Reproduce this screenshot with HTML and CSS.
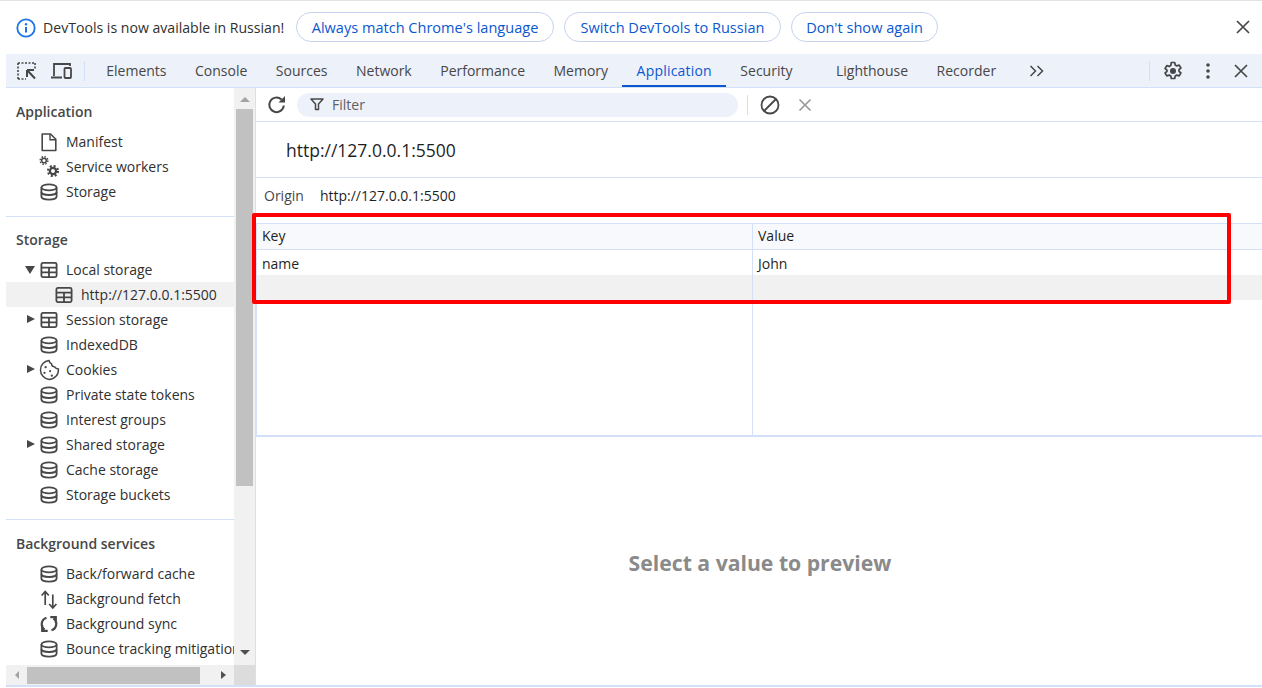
FILE: index.html
```html
<!DOCTYPE html>
<html lang="en">
<head>
<meta charset="utf-8">
<title>DevTools</title>
<link rel="stylesheet" href="styles.css">
</head>
<body>
<svg class="defs" width="0" height="0" aria-hidden="true">
  <symbol id="db" viewBox="0 0 18 18"><g fill="none" stroke="currentColor" stroke-width="1.800"><ellipse cx="9" cy="4.400" rx="7.600" ry="3"/><path d="M1.400 4.400v9.200c0 1.700 3.400 3 7.600 3s7.600-1.300 7.600-3V4.400"/><path d="M1.400 9c0 1.700 3.400 3 7.600 3s7.600-1.300 7.600-3"/></g></symbol>
  <symbol id="tbl" viewBox="0 0 18 18"><g fill="none" stroke="currentColor" stroke-width="1.800"><rect x="1.400" y="1.900" width="15.200" height="14.200" rx="1.500"/><path d="M1.400 6.700h15.200M1.400 11.400h15.200M9 6.700V16"/></g></symbol>
</svg>
<div class="infobar">
  <svg class="info-icon" viewBox="0 0 20 20" width="20" height="20"><circle cx="10" cy="10" r="8.700" fill="none" stroke="#1a73e8" stroke-width="1.800"/><path d="M10 9v5.500" stroke="#1a73e8" stroke-width="2"/><circle cx="10" cy="6.200" r="1.200" fill="#1a73e8"/></svg>
  <span class="info-text">DevTools is now available in Russian!</span>
  <button class="pill pill-always">Always match Chrome's language</button>
  <button class="pill pill-switch">Switch DevTools to Russian</button>
  <button class="pill pill-dont">Don't show again</button>
  <span class="spacer"></span>
  <svg class="x-icon" viewBox="0 0 14 14" width="14" height="14"><path d="M1 1l12 12M13 1L1 13" stroke="#474747" stroke-width="1.700"/></svg>
</div>
<div class="shell">
  <div class="tabbar">
    <svg class="tb-inspect" viewBox="0 0 20 18" width="20" height="18"><path d="M1 1h17M1 1v16M1 17h8M18 1v6" fill="none" stroke="#474747" stroke-width="1.600" stroke-dasharray="2 1.500"/><path d="M10 8h7M10 8v7M10 8l8 8.500" fill="none" stroke="#474747" stroke-width="2"/></svg>
    <svg class="tb-device" viewBox="0 0 22 18" width="22" height="18"><path d="M3 14V2h16v2M0 15.500h11" fill="none" stroke="#474747" stroke-width="1.800"/><rect x="13.500" y="6" width="6.500" height="10" rx="1" fill="none" stroke="#474747" stroke-width="1.800"/></svg>
    <span class="tb-sep tb-sep-left"></span>
    <span class="tab">Elements</span>
    <span class="tab">Console</span>
    <span class="tab">Sources</span>
    <span class="tab">Network</span>
    <span class="tab">Performance</span>
    <span class="tab">Memory</span>
    <span class="tab tab-active">Application</span>
    <span class="tab">Security</span>
    <span class="tab tab-far">Lighthouse</span>
    <span class="tab">Recorder</span>
    <svg class="tb-more" viewBox="0 0 16 12" width="16" height="12"><path d="M1.500 1l5 5-5 5M8.500 1l5 5-5 5" fill="none" stroke="#474747" stroke-width="1.500"/></svg>
    <span class="spacer"></span>
    <span class="tb-sep"></span>
    <svg class="tb-gear" viewBox="0 0 20 20" width="20" height="20"><path d="M8.300 1.500h3.400l.5 2.500 1.600.9 2.400-.8 1.700 2.900-1.900 1.700v1.600l1.900 1.700-1.700 2.900-2.400-.8-1.600.9-.5 2.500H8.300l-.5-2.500-1.600-.9-2.400.8-1.700-2.900 1.900-1.700V9.200L2.100 7.500l1.700-2.900 2.400.8 1.600-.9z" fill="none" stroke="#474747" stroke-width="1.700" stroke-linejoin="round"/><circle cx="10" cy="10" r="3" fill="#474747"/></svg>
    <svg class="tb-dots" viewBox="0 0 4 16" width="4" height="16"><circle cx="2" cy="2" r="1.800" fill="#474747"/><circle cx="2" cy="8" r="1.800" fill="#474747"/><circle cx="2" cy="14" r="1.800" fill="#474747"/></svg>
    <svg class="tb-close" viewBox="0 0 14 14" width="14" height="14"><path d="M1 1l12 12M13 1L1 13" stroke="#474747" stroke-width="1.700"/></svg>
  </div>
  <div class="panes">
    <aside class="sidepane">
      <div class="side-row">
        <nav class="side-scroll">
          <section class="side-sec side-first">
            <h3 class="side-head">Application</h3>
            <div class="item"><svg class="ico ico-free" viewBox="0 0 18 18"><path d="M2.200 1h8.300l5.300 5.300V17.500H2.200z" fill="none" stroke="currentColor" stroke-width="1.600" stroke-linejoin="round"/><path d="M10 1v5.800h5.800" fill="none" stroke="currentColor" stroke-width="1.400"/></svg><span>Manifest</span></div>
            <div class="item"><svg class="ico ico-free" viewBox="0 0 18 18"><g fill="none" stroke="currentColor"><circle cx="4" cy="2.500" r="2.300" stroke-width="1.500"/><circle cx="4" cy="2.500" r="3.800" stroke-width="1.500" stroke-dasharray="1.500 1.480"/><circle cx="13" cy="13" r="3.100" stroke-width="2.300"/><circle cx="13" cy="13" r="5" stroke-width="2.200" stroke-dasharray="2 1.930"/></g></svg><span>Service workers</span></div>
            <div class="item"><svg class="ico"><use href="#db"/></svg><span>Storage</span></div>
          </section>
          <section class="side-sec">
            <h3 class="side-head">Storage</h3>
            <div class="item"><i class="arrow arrow-down"></i><svg class="ico"><use href="#tbl"/></svg><span>Local storage</span></div>
            <div class="item item-child item-sel"><svg class="ico"><use href="#tbl"/></svg><span>http://127.0.0.1:5500</span></div>
            <div class="item"><i class="arrow"></i><svg class="ico"><use href="#tbl"/></svg><span>Session storage</span></div>
            <div class="item"><svg class="ico"><use href="#db"/></svg><span>IndexedDB</span></div>
            <div class="item"><i class="arrow"></i><svg class="ico ico-free" viewBox="2 2 16 16"><path d="M10 1.500c.2 1.800 1 2.600 2.200 3 .1 1.700 1.300 2.800 3 2.800.4 1 1.300 1.600 3.200 1.800.4 5-3.500 9.300-8.400 9.300A8.500 8.500 0 0 1 10 1.500z" fill="none" stroke="currentColor" stroke-width="1.300"/><circle cx="7" cy="7.500" r="1" fill="currentColor"/><circle cx="6" cy="12.500" r="1" fill="currentColor"/><circle cx="11" cy="11" r=".9" fill="currentColor"/><circle cx="12.500" cy="15" r="1" fill="currentColor"/></svg><span>Cookies</span></div>
            <div class="item"><svg class="ico"><use href="#db"/></svg><span>Private state tokens</span></div>
            <div class="item"><svg class="ico"><use href="#db"/></svg><span>Interest groups</span></div>
            <div class="item"><i class="arrow"></i><svg class="ico"><use href="#db"/></svg><span>Shared storage</span></div>
            <div class="item"><svg class="ico"><use href="#db"/></svg><span>Cache storage</span></div>
            <div class="item"><svg class="ico"><use href="#db"/></svg><span>Storage buckets</span></div>
          </section>
          <section class="side-sec side-last">
            <h3 class="side-head">Background services</h3>
            <div class="item"><svg class="ico"><use href="#db"/></svg><span>Back/forward cache</span></div>
            <div class="item"><svg class="ico ico-free" viewBox="0 0 18 18"><path d="M5.200 15V1.500M1.600 5.500l3.600-4 3.600 4M12.800 4.500V18M9.200 14l3.600 4 3.600-4" fill="none" stroke="currentColor" stroke-width="1.700"/></svg><span>Background fetch</span></div>
            <div class="item"><svg class="ico ico-free" viewBox="0 0 18 18"><path d="M6.500 2.800A6.600 6.600 0 0 0 4.500 14.500M11.500 15.200A6.600 6.600 0 0 0 13.500 3.500M2.200 10v5.800h5.500M15.800 8V2.200h-5.500" fill="none" stroke="currentColor" stroke-width="2.200"/></svg><span>Background sync</span></div>
            <div class="item"><svg class="ico"><use href="#db"/></svg><span>Bounce tracking mitigations</span></div>
            <div class="item"><svg class="ico" viewBox="0 0 18 18"><path d="M9 0v2M4 13V8a5 5 0 0 1 10 0v5l1.500 2h-13z" fill="none" stroke="currentColor" stroke-width="1.600"/></svg><span>Notifications</span></div>
          </section>
        </nav>
        <div class="vscroll">
          <i class="tri tri-up"></i>
          <div class="vtrack"><div class="vthumb"></div></div>
          <i class="tri tri-down"></i>
        </div>
      </div>
      <div class="hscroll">
        <i class="tri tri-left"></i>
        <div class="htrack"><div class="hthumb"></div></div>
        <i class="tri tri-right"></i>
        <span class="hcorner"></span>
      </div>
    </aside>
    <main class="mainpane">
      <div class="filterbar">
        <svg class="fb-reload" viewBox="0 0 20 20" width="20" height="20"><path d="M16.800 10.500A7.300 7.300 0 1 1 14.500 4.500" fill="none" stroke="#474747" stroke-width="2"/><path d="M18 1v6.500h-6.500z" fill="#474747"/></svg>
        <div class="filter"><svg viewBox="0 0 14 14" width="14" height="14"><path d="M1 2h12L8.500 7v5.500h-3V7z" fill="none" stroke="#474747" stroke-width="1.500" stroke-linejoin="round"/></svg><span>Filter</span></div>
        <span class="fb-sep"></span>
        <svg class="fb-block" viewBox="0 0 20 20" width="20" height="20"><circle cx="10" cy="10" r="8.500" fill="none" stroke="#474747" stroke-width="1.800"/><path d="M4 16L16 4" stroke="#474747" stroke-width="1.800"/></svg>
        <svg class="fb-x" viewBox="0 0 14 14" width="14" height="14"><path d="M1.500 1.500l11 11M12.500 1.500l-11 11" stroke="#9a9a9a" stroke-width="1.700"/></svg>
      </div>
      <h2 class="origin-title">http://127.0.0.1:5500</h2>
      <div class="origin-row"><span class="origin-label">Origin</span><span>http://127.0.0.1:5500</span></div>
      <div class="grid">
        <div class="g-row g-head"><div class="g-key">Key</div><div class="g-val">Value</div></div>
        <div class="g-row g-data"><div class="g-key">name</div><div class="g-val">John</div></div>
        <div class="g-row g-empty"><div class="g-key"></div><div class="g-val"></div></div>
        <div class="g-row g-fill"><div class="g-key"></div><div class="g-val"></div></div>
      </div>
      <div class="preview">Select a value to preview</div>
    </main>
  </div>
</div>
<div class="highlight"></div>
</body>
</html>
```
FILE: styles.css
```css
* { box-sizing: border-box; }
html, body { height: 100%; }
body {
  margin: 0;
  height: 688px;
  overflow: hidden;
  background: #fff;
  color: #303030;
  font-family: "Open Sans", "Noto Sans", "Liberation Sans", sans-serif;
  font-size: 13.3px;
  display: flex;
  flex-direction: column;
  border-top: 1px solid #e3e3e3;
  padding-bottom: 1px;
}
.defs { position: absolute; }
.spacer { flex: 1; }

.infobar {
  height: 53px;
  flex: none;
  display: flex;
  align-items: center;
  padding: 0 12px 1px 16px;
}
.info-icon { flex: none; margin: 1px 7px 0 0; }
.info-text { font-size: 14.100px; color: #303030; width: 253px; flex: none; }
.pill {
  height: 30px;
  margin-right: 10px;
  border: 1px solid #c4d3ee;
  border-radius: 15px;
  background: #fff;
  color: #0b57d0;
  font: inherit;
  font-size: 14.550px;
  padding: 0;
  flex: none;
}
.pill-always { width: 258px; }
.pill-switch { width: 217px; }
.pill-dont { width: 147px; }
.x-icon { flex: none; }

.shell { flex: 1; min-height: 0; margin-left: 6px; display: flex; flex-direction: column; }
.tabbar {
  height: 34px;
  flex: none;
  display: flex;
  align-items: center;
  background: #edf1fa;
  border-bottom: 1px solid #d3e0f7;
  padding: 0 14px 0 11px;
}
.tb-inspect { margin-right: 14px; }
.tb-device { margin-right: 11px; }
.tb-sep { width: 1px; height: 20px; background: #d3e0f7; flex: none; }
.tb-sep-left { margin-right: 7px; }
.tab {
  height: 33px;
  display: flex;
  align-items: center;
  padding: 0 14.250px 1px;
  color: #474747;
  font-size: 14px;
}
.tab-active { color: #0b57d0; box-shadow: inset 0 -2px 0 #0b57d0; letter-spacing: .2px; }
.tab-far { margin-left: 15px; }
.tb-more { margin-left: 19px; }
.tb-gear { margin-left: 13px; margin-right: 23px; }
.tb-dots { margin-right: 24px; }

.panes { flex: 1; min-height: 0; display: flex; border-bottom: 2px solid #d3e0f7; }
.sidepane { width: 250px; flex: none; display: flex; flex-direction: column; border-right: 1px solid #d3e0f7; }
.side-row { flex: 1; min-height: 0; display: flex; }
.side-scroll { flex: 1; min-width: 0; overflow: hidden; }
.side-sec { border-top: 1px solid #d3e0f7; padding: 11px 0 12px; }
.side-first { border-top-color: transparent; }
.side-last { padding-top: 12px; }
.side-head {
  margin: 0 0 5px;
  height: 24px;
  line-height: 24px;
  padding-left: 10px;
  font-size: 14px;
  font-weight: 600;
  color: #474747;
}
.item {
  height: 25px;
  display: flex;
  align-items: center;
  padding-left: 34px;
  position: relative;
  color: #303030;
  white-space: nowrap;
  font-size: 14px;
}
.item-child { padding-left: 49px; }
.item-sel { background: #f1f1f1; }
.ico { width: 18px; height: 18px; flex: none; margin-right: 8px; color: #474747; }
.ico-free { overflow: visible; }
.arrow {
  position: absolute;
  left: 21px;
  top: 8px;
  border-left: 8px solid #474747;
  border-top: 4.500px solid transparent;
  border-bottom: 4.500px solid transparent;
}
.arrow-down {
  left: 19px;
  top: 9px;
  border-top: 8px solid #474747;
  border-left: 5px solid transparent;
  border-right: 5px solid transparent;
  border-bottom: 0;
}
.vscroll { width: 21px; flex: none; background: #f1f1f1; display: flex; flex-direction: column; align-items: center; }
.vtrack { flex: 1; width: 100%; margin-top: 7px; margin-bottom: 164px; }
.vthumb { height: 100%; background: #c1c1c1; width: 17px; margin: 0 auto; }
.hscroll { height: 20px; flex: none; display: flex; align-items: center; background: #f1f1f1; padding-left: 9px; }
.htrack { width: 194px; margin-left: 8px; height: 17px; align-self: flex-end; margin-bottom: 1px; }
.hthumb { height: 100%; width: 173px; background: #c1c1c1; }
.hcorner { flex: 1; align-self: stretch; background: #dcdcdc; margin-left: 8px; }
.tri { display: block; flex: none; width: 0; height: 0; border-style: solid; border-color: transparent; }
.tri-up { border-width: 0 5px 5px; border-bottom-color: #a3a3a3; margin-top: 9px; }
.tri-down { border-width: 5px 5px 0; border-top-color: #505050; margin-bottom: 10px; }
.tri-left { border-width: 4px 4px 4px 0; border-right-color: #a3a3a3; }
.tri-right { border-width: 4.500px 0 4.500px 5px; border-left-color: #505050; }

.mainpane { flex: 1; min-width: 0; display: flex; flex-direction: column; }
.filterbar {
  height: 34px;
  flex: none;
  display: flex;
  align-items: center;
  border-bottom: 1px solid #d3e0f7;
  padding-left: 11px;
}
.filter {
  width: 441px;
  height: 24px;
  margin-left: 10px;
  border-radius: 12px;
  background: #edf1fa;
  display: flex;
  align-items: center;
  gap: 8px;
  padding: 0 0 1px 13px;
  color: #5f5f5f;
  font-size: 14px;
}
.fb-sep { width: 1px; height: 20px; background: #d3e0f7; margin-left: 9px; }
.fb-block { margin-left: 12px; }
.fb-x { margin-left: 18px; }
.origin-title {
  height: 56px;
  flex: none;
  margin: 0;
  padding-left: 30px;
  font-size: 17.500px;
  font-weight: 400;
  line-height: 56px;
  color: #1f1f1f;
  border-bottom: 1px solid #d3e0f7;
}
.origin-row {
  height: 45px;
  flex: none;
  display: flex;
  align-items: center;
  padding: 0 0 10px 8px;
  gap: 16px;
  font-size: 14px;
  color: #1f1f1f;
}
.origin-label { color: #474747; }
.grid { flex: none; border-top: 1px solid #d3e0f7; border-left: 1px solid #d3e0f7; border-bottom: 2px solid #d3e0f7; }
.g-row { display: flex; height: 25px; color: #1f1f1f; font-size: 14px; line-height: 25px; }
.g-key { width: 496px; flex: none; padding-left: 5px; border-right: 1px solid #d3e0f7; }
.g-val { flex: 1; padding-left: 5px; }
.g-head { height: 26px; line-height: 24px; background: #f8f9fd; border-bottom: 1px solid #d3e0f7; }
.g-data { line-height: 27px; }
.g-empty { background: #f1f1f1; }
.g-fill { height: 135px; }
.preview {
  flex: 1;
  display: flex;
  align-items: center;
  justify-content: center;
  font-size: 21.200px;
  font-weight: 700;
  color: #8a8a8a;
  padding: 3px 0 0 2px;
}
.highlight {
  position: absolute;
  left: 252px;
  top: 213px;
  width: 979px;
  height: 91px;
  border: 4px solid #fe0000;
  border-radius: 2px;
}
```
